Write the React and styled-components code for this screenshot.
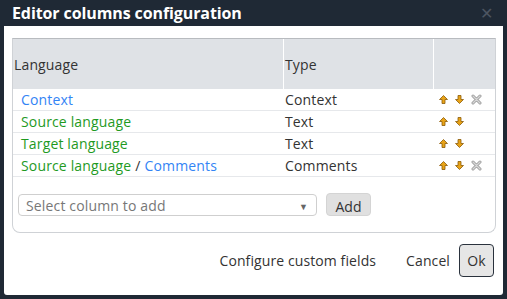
import styled, { createGlobalStyle } from "styled-components";

const Global = createGlobalStyle`
  body {
    margin: 0;
    background: #1f2935;
    font-family: "Open Sans", "Liberation Sans", sans-serif;
  }
`;

const Dialog = styled.div`
  width: 507px;
  height: 299px;
  background: #1f2935;
  display: flex;
  flex-direction: column;
  box-sizing: border-box;
  padding: 0 4px 4px 4px;
`;
const TitleBar = styled.div`
  height: 26px;
  display: flex;
  align-items: center;
  justify-content: space-between;
  padding: 0 10px 0 8px;
`;
const Title = styled.div`
  color: #fff;
  font-weight: 700;
  font-size: 16px;
  letter-spacing: -0.1px;
`;
const Close = styled.div`
  color: #4d5561;
  font-size: 16px;
  line-height: 1;
`;
const Body = styled.div`
  flex: 1;
  background: #fff;
  border-radius: 0 0 3px 3px;
  display: flex;
  flex-direction: column;
  padding: 12px 7px 0 8px;
`;
const Panel = styled.div`
  border: 1px solid #cfd2d6;
  border-top-color: #b8bbbf;
  border-radius: 0 0 8px 8px;
  height: 195px;
  box-sizing: border-box;
`;
const Table = styled.div`
  display: grid;
  grid-template-columns: 270px 150px 1fr;
  font-size: 14px;
  letter-spacing: 0.15px;
  color: #333;
`;
const HeadCell = styled.div`
  background: #dfe2e6;
  height: 50px;
  display: flex;
  align-items: center;
  border-left: ${(p) => (p.$first ? "none" : "1px solid #fff")};
  padding-left: 1px;
`;
const Cell = styled.div`
  height: 21px;
  border-bottom: 1px solid #e6e8eb;
  display: flex;
  align-items: center;
  padding-left: ${(p) => p.$pad || 2}px;
  white-space: nowrap;
`;
const Lang = styled.span`
  color: ${(p) => (p.$kind === "blue" ? "#3384f5" : "#1f9a1f")};
`;
const Slash = styled.span`
  color: #333;
  margin: 0 4px;
`;
const Icons = styled.div`
  display: flex;
  gap: 7px;
  align-items: center;
  padding-left: 4px;
`;
const AddRow = styled.div`
  display: flex;
  align-items: flex-start;
  gap: 9px;
  padding: 17px 0 0 5px;
`;
const Select = styled.div`
  width: 299px;
  height: 22px;
  box-sizing: border-box;
  border: 1px solid #cfcfcf;
  border-radius: 4px;
  display: flex;
  align-items: center;
  justify-content: space-between;
  padding: 0 8px 0 7px;
  color: #777;
  font-size: 14px;
  letter-spacing: 0.15px;
`;
const Caret = styled.span`
  color: #666;
  font-size: 9px;
  margin-top: 3px;
`;
const AddButton = styled.div`
  width: 45px;
  height: 23px;
  box-sizing: border-box;
  border-radius: 4px;
  background: #e0e0e0;
  border: 1px solid #d4d4d4;
  color: #333;
  font-size: 14px;
  line-height: 14px;
  display: flex;
  align-items: flex-end;
  justify-content: center;
  padding-bottom: 1px;
  margin-top: -1px;
`;
const Footer = styled.div`
  display: flex;
  justify-content: flex-end;
  align-items: center;
  padding: 11px 2px 0 0;
  font-size: 14px;
  letter-spacing: 0.1px;
  color: #333;
`;
const FooterLink = styled.div`
  margin-right: ${(p) => p.$gap}px;
`;
const OkButton = styled.div`
  width: 35px;
  height: 33px;
  box-sizing: border-box;
  border: 1px solid #2a323d;
  border-radius: 4px;
  background: #e6e6e6;
  display: flex;
  align-items: center;
  justify-content: center;
`;

function Up() {
  return (
    <svg width="9" height="9" viewBox="0 0 9 9">
      <path d="M4.5 0.5 L8.5 4.5 L6 4.5 L6 8.5 L3 8.5 L3 4.5 L0.5 4.5 Z" fill="#e8a317" stroke="#8a5a0a" strokeWidth="0.8" />
    </svg>
  );
}
function Down() {
  return (
    <svg width="9" height="9" viewBox="0 0 9 9">
      <path d="M4.5 8.5 L8.5 4.5 L6 4.5 L6 0.5 L3 0.5 L3 4.5 L0.5 4.5 Z" fill="#e8a317" stroke="#8a5a0a" strokeWidth="0.8" />
    </svg>
  );
}
function Remove() {
  return (
    <svg width="11" height="11" viewBox="0 0 11 11">
      <path d="M2 2 L9 9 M9 2 L2 9" stroke="#9a9a9a" strokeWidth="3" strokeLinecap="round" />
      <path d="M2 2 L9 9 M9 2 L2 9" stroke="#d6d6d6" strokeWidth="1.4" strokeLinecap="round" />
    </svg>
  );
}

const rows = [
  { lang: [["blue", "Context"]], type: "Context", del: true },
  { lang: [["green", "Source language"]], type: "Text" },
  { lang: [["green", "Target language"]], type: "Text" },
  { lang: [["green", "Source language"], ["blue", "Comments"]], type: "Comments", del: true },
];

export default function App() {
  return (
    <>
      <Global />
      <Dialog>
        <TitleBar>
          <Title>Editor columns configuration</Title>
          <Close>✕</Close>
        </TitleBar>
        <Body>
          <Panel>
            <Table>
              <HeadCell $first>Language</HeadCell>
              <HeadCell>Type</HeadCell>
              <HeadCell />
              {rows.map((r, i) => (
                <>
                  <Cell key={"l" + i} $pad={8}>
                    {r.lang.map(([k, t], j) => (
                      <span key={j}>
                        {j > 0 && <Slash>/</Slash>}
                        <Lang $kind={k}>{t}</Lang>
                      </span>
                    ))}
                  </Cell>
                  <Cell key={"t" + i}>{r.type}</Cell>
                  <Cell key={"a" + i}>
                    <Icons>
                      <Up />
                      <Down />
                      {r.del && <Remove />}
                    </Icons>
                  </Cell>
                </>
              ))}
            </Table>
            <AddRow>
              <Select>
                Select column to add
                <Caret>▼</Caret>
              </Select>
              <AddButton>Add</AddButton>
            </AddRow>
          </Panel>
          <Footer>
            <FooterLink $gap={30}>Configure custom fields</FooterLink>
            <FooterLink $gap={9}>Cancel</FooterLink>
            <OkButton>Ok</OkButton>
          </Footer>
        </Body>
      </Dialog>
    </>
  );
}
